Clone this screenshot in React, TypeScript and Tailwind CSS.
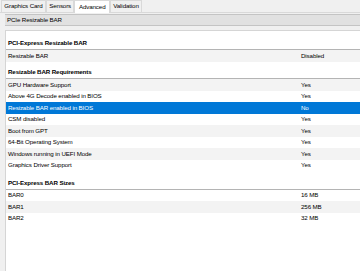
import React from "react";

type Row = { label: string; value?: string; header?: boolean; selected?: boolean };

const rows: Row[] = [
  { label: "PCI-Express Resizable BAR", header: true },
  { label: "Resizable BAR", value: "Disabled" },
  { label: "Resizable BAR Requirements", header: true },
  { label: "GPU Hardware Support", value: "Yes" },
  { label: "Above 4G Decode enabled in BIOS", value: "Yes" },
  { label: "Resizable BAR enabled in BIOS", value: "No", selected: true },
  { label: "CSM disabled", value: "Yes" },
  { label: "Boot from GPT", value: "Yes" },
  { label: "64-Bit Operating System", value: "Yes" },
  { label: "Windows running in UEFI Mode", value: "Yes" },
  { label: "Graphics Driver Support", value: "Yes" },
  { label: "PCI-Express BAR Sizes", header: true },
  { label: "BAR0", value: "16 MB" },
  { label: "BAR1", value: "256 MB" },
  { label: "BAR2", value: "32 MB" },
];

const tabs = ["Graphics Card", "Sensors", "Advanced", "Validation"];

// header heights: first one includes the list's top padding
const headerHeight: Record<number, string> = {
  0: "h-[19.5px]",
  2: "h-[17.5px]",
  11: "h-[18.5px]",
};

export default function App() {
  return (
    <div
      className="h-[271px] w-[360px] overflow-hidden bg-[#f0f0f0] text-[6.2px] leading-none tracking-[-0.12px] text-black"
      style={{ fontFamily: '"Liberation Sans", Arial, sans-serif' }}
    >
      <div className="flex h-[13px] items-end border-b border-[#d9d9d9] pl-[1px]">
        {tabs.map((t) => (
          <div
            key={t}
            className={
              t === "Advanced"
                ? "-mb-px flex h-[13px] items-center border border-b-0 border-[#d9d9d9] bg-white px-[3.5px]"
                : "flex h-[12px] items-center border border-b-0 border-[#d9d9d9] bg-[#f0f0f0] px-[2.3px]"
            }
          >
            {t}
          </div>
        ))}
      </div>

      <div className="ml-[5px] mt-[1px] flex h-[12px] items-center border-y border-[#c4c4c4] bg-[#e1e1e1] pl-[2px]">
        PCIe Resizable BAR
      </div>

      <div className="ml-[5px] mt-[3.5px] h-[300px] border-l border-t border-[#d5d5d5] bg-white">
        {rows.map((r, i) =>
          r.header ? (
            <div
              key={r.label}
              className={`flex ${headerHeight[i]} items-end border-b border-[#b4b4b4] pb-[2.5px] pl-[2px] font-bold`}
            >
              {r.label}
            </div>
          ) : (
            <div
              key={r.label}
              className={
                r.selected
                  ? "flex h-[11.5px] items-center bg-[#0078d7] text-white"
                  : i % 2 === 1
                    ? "flex h-[11.5px] items-center bg-[#f3f3f3]"
                    : "flex h-[11.5px] items-center bg-white"
              }
            >
              <span className="w-[295px] shrink-0 pl-[2px]">{r.label}</span>
              <span>{r.value}</span>
            </div>
          ),
        )}
      </div>
    </div>
  );
}
